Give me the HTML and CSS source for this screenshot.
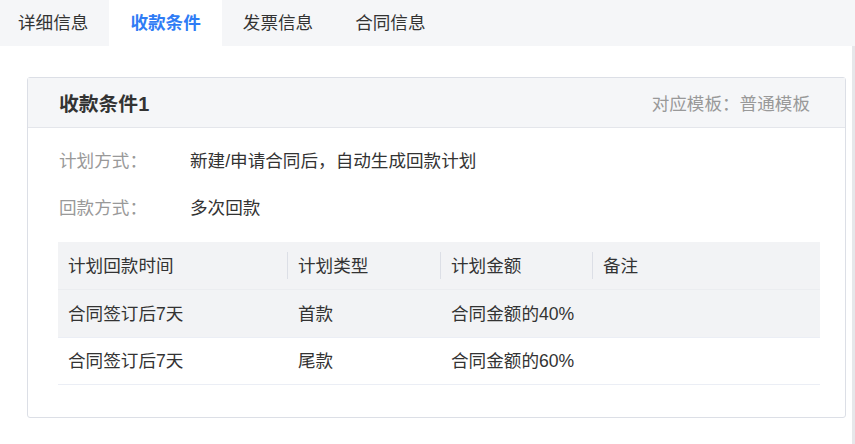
FILE: index.html
```html
<!DOCTYPE html>
<html lang="zh-CN">
<head>
  <meta charset="UTF-8" />
  <meta name="viewport" content="width=device-width, initial-scale=1.0" />
  <title>收款条件</title>
  <link rel="stylesheet" href="styles.css">
</head>
<body>
  <div class="tabs">
    <div class="tab">详细信息</div>
    <div class="tab active">收款条件</div>
    <div class="tab">发票信息</div>
    <div class="tab">合同信息</div>
  </div>

  <div class="panel">
    <div class="card">
      <div class="card-header">
        <span class="card-title">收款条件1</span>
        <span class="card-extra">对应模板：普通模板</span>
      </div>

      <div class="card-body">
        <div class="field">
          <span class="field-label">计划方式：</span>
          <span class="field-value">新建/申请合同后，自动生成回款计划</span>
        </div>
        <div class="field">
          <span class="field-label">回款方式：</span>
          <span class="field-value">多次回款</span>
        </div>

        <table class="plan-table">
          <colgroup>
            <col style="width: 229px">
            <col style="width: 153px">
            <col style="width: 152px">
            <col>
          </colgroup>
          <thead>
            <tr>
              <th>计划回款时间</th>
              <th>计划类型</th>
              <th>计划金额</th>
              <th>备注</th>
            </tr>
          </thead>
          <tbody>
            <tr class="striped">
              <td>合同签订后7天</td>
              <td>首款</td>
              <td>合同金额的40%</td>
              <td></td>
            </tr>
            <tr>
              <td>合同签订后7天</td>
              <td>尾款</td>
              <td>合同金额的60%</td>
              <td></td>
            </tr>
          </tbody>
        </table>
      </div>
    </div>
  </div>
</body>
</html>
```

FILE: styles.css
```css
* {
  margin: 0;
  padding: 0;
  box-sizing: border-box;
}

body {
  font-family: "Liberation Sans", "Noto Sans CJK SC", sans-serif;
  font-size: 17.6px;
  color: #333;
  background: #e6e7ea;
  width: 855px;
  height: 444px;
  overflow: hidden;
  text-spacing-trim: space-all;
}

.tabs {
  display: flex;
  height: 46px;
  background: #f5f6f8;
}

.tab {
  padding: 0 21px;
  line-height: 46px;
  color: #333;
}

.tab:first-child {
  padding-left: 18px;
}

.tab.active {
  background: #fff;
  color: #2f7cf5;
  font-weight: bold;
}

.panel {
  width: 852px;
  height: 398px;
  background: #fff;
  padding: 31px 6px 0 27px;
}

.card {
  border: 1px solid #dcdfe6;
  border-radius: 3px;
}

.card-header {
  display: flex;
  justify-content: space-between;
  align-items: center;
  height: 50px;
  padding: 0 35px 0 31px;
  background: #f5f6f8;
  border-bottom: 1px solid #e4e6eb;
}

.card-title {
  font-size: 19.8px;
  font-weight: bold;
  color: #333;
}

.card-extra {
  color: #999;
}

.card-body {
  padding: 8px 25px 32px 30px;
}

.field {
  display: flex;
  height: 47px;
  align-items: center;
  padding-left: 1px;
}

.field-label {
  width: 131px;
  color: #999;
}

.field-value {
  color: #333;
}

.plan-table {
  width: 100%;
  margin-top: 12px;
  border-collapse: collapse;
  table-layout: fixed;
}

.plan-table th,
.plan-table td {
  height: 47.5px;
  padding: 0 10px 2px;
  text-align: left;
  font-weight: normal;
  color: #333;
}

.plan-table th {
  position: relative;
  background: #f2f3f5;
  border-bottom: 1px solid #ebedf0;
}

.plan-table th + th {
  padding-left: 11px;
}

.plan-table th + th::before {
  content: "";
  position: absolute;
  left: 0;
  top: 10px;
  bottom: 10px;
  width: 1px;
  background: #dcdfe6;
}

.plan-table td + td {
  padding-left: 11px;
}

.plan-table tr.striped td {
  background: #f2f3f5;
}

.plan-table tbody tr {
  border-bottom: 1px solid #ebeef5;
}
```
